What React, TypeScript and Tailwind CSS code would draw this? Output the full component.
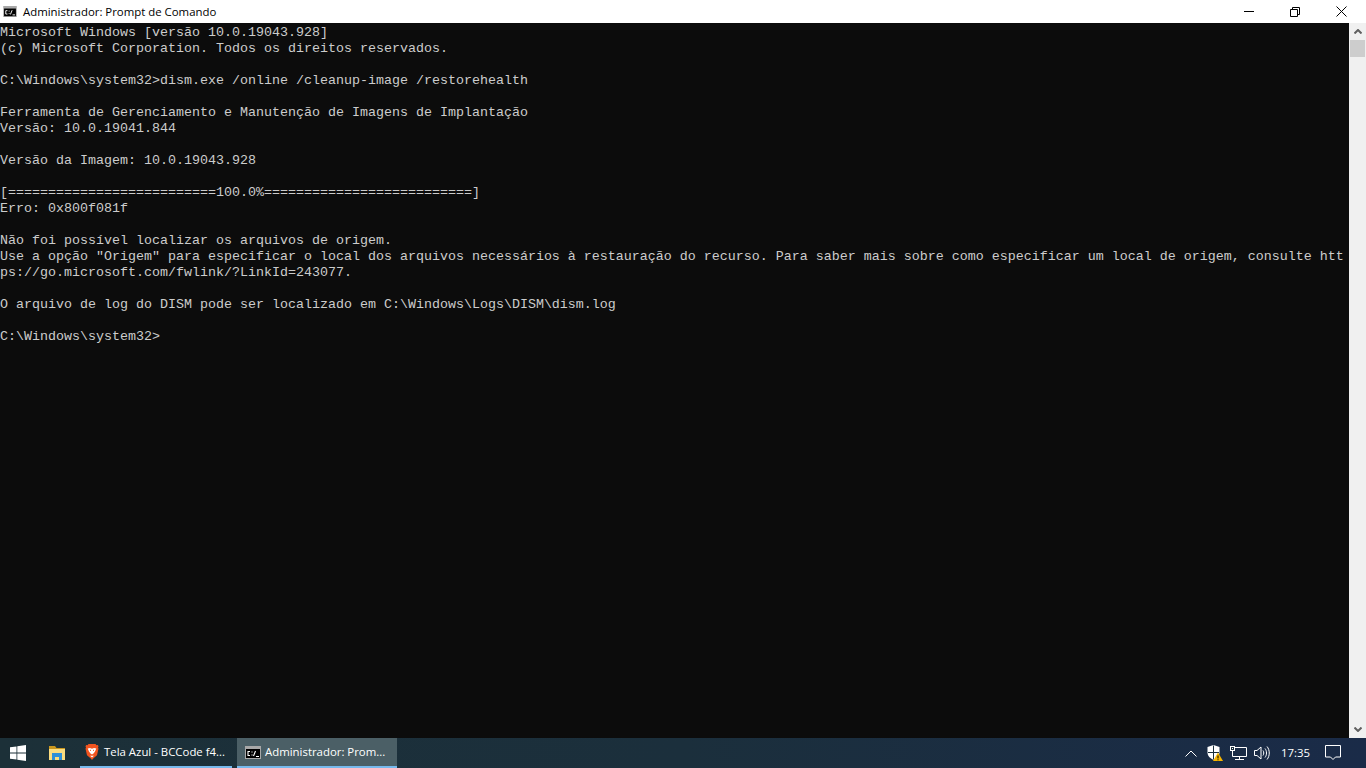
const lines = [
  'Microsoft Windows [versão 10.0.19043.928]',
  '(c) Microsoft Corporation. Todos os direitos reservados.',
  '',
  'C:\\Windows\\system32>dism.exe /online /cleanup-image /restorehealth',
  '',
  'Ferramenta de Gerenciamento e Manutenção de Imagens de Implantação',
  'Versão: 10.0.19041.844',
  '',
  'Versão da Imagem: 10.0.19043.928',
  '',
  '[==========================100.0%==========================]',
  'Erro: 0x800f081f',
  '',
  'Não foi possível localizar os arquivos de origem.',
  'Use a opção "Origem" para especificar o local dos arquivos necessários à restauração do recurso. Para saber mais sobre como especificar um local de origem, consulte htt',
  'ps://go.microsoft.com/fwlink/?LinkId=243077.',
  '',
  'O arquivo de log do DISM pode ser localizado em C:\\Windows\\Logs\\DISM\\dism.log',
  '',
  'C:\\Windows\\system32>',
];

function CmdIcon({ width = 16, height = 13 }: { width?: number; height?: number }) {
  return (
    <svg width={width} height={height} viewBox="0 0 16 13" className="shrink-0">
      <rect width="16" height="13" fill="#a8a8a8" />
      <rect x="1" y="3" width="14" height="9" fill="#000" />
      <path d="M5 5.500H3v4h2M7 5.500v1M7 8.500v1M8.500 10l2-5M11 10.500h3" stroke="#fff" strokeWidth="1.100" fill="none" />
    </svg>
  );
}

function BraveIcon() {
  return (
    <svg width="14" height="16" viewBox="0 0 14 16" className="shrink-0">
      <path d="M3.500 0h7l1 1.200 1.300-.2.700 1.200-.5 1.300.5 1.300-1.500 6.500-3.500 3L7 16l-1.500-1.700-3.500-3L.5 4.800 1 3.500.5 2.200 1.200 1l1.300.2z" fill="#f1541f" />
      <path d="M2.700 4.500L5 4l2 .8L9 4l2.300.5-1.300 3-1.500 2-1.500 1-1.500-1-1.500-2z" fill="#fff" />
      <path d="M5 11.800h4l-2 1.800z" fill="#fff" />
      <path d="M5 6.300h1M8 6.300h1" stroke="#f1541f" />
    </svg>
  );
}

function FolderIcon() {
  return (
    <svg width="16" height="14" viewBox="0 0 16 14" className="shrink-0">
      <path d="M0 0h6l1.500 2H16v2H0z" fill="#c8961e" />
      <path d="M0 3h16v11H0z" fill="#fbdc7f" />
      <path d="M3 7h10v7h-3v-3H6v3H3z" fill="#2f8fd8" />
    </svg>
  );
}

export default function App() {
  return (
    <div className="h-screen flex flex-col overflow-hidden bg-[#0c0c0c] font-['Open_Sans',sans-serif]">
      {/* barra de titulo */}
      <div className="h-[23px] shrink-0 bg-white flex items-center text-black">
        <div className="pl-[3px] pr-[6px]"><CmdIcon width={14} height={11} /></div>
        <span className="text-[11.4px] leading-none">Administrador: Prompt de Comando</span>
        <div className="ml-auto mr-[2px] flex h-full">
          <div className="w-[46px] flex items-center justify-center">
            <div className="w-[10px] h-px bg-black" />
          </div>
          <div className="w-[46px] flex items-center justify-center">
            <svg width="10" height="10" viewBox="0 0 10 10" fill="none" stroke="#000">
              <path d="M0.500 2.500h7v7h-7zM2.500 2.500v-2h7v7h-2" />
            </svg>
          </div>
          <div className="w-[46px] flex items-center justify-center">
            <svg width="11" height="11" viewBox="0 0 11 11" fill="none" stroke="#000">
              <path d="M0.500 0.500l10 10M10.500 0.500l-10 10" />
            </svg>
          </div>
        </div>
      </div>

      {/* console */}
      <div className="flex-1 flex min-h-0">
        <div className="flex-1 min-w-0 overflow-hidden pt-[2px]">
          {lines.map((line, i) => (
            <div key={i} className="h-4 whitespace-pre text-[13.33px] leading-4 text-[#cccccc] font-['Liberation_Mono',monospace]">
              {line}
            </div>
          ))}
        </div>
        <div className="w-[17px] shrink-0 bg-[#f0f0f0] flex flex-col pl-px">
          <div className="h-[17px] flex items-center justify-center">
            <svg width="8" height="5" viewBox="0 0 8 5" fill="none" stroke="#606060" strokeWidth="2">
              <path d="M0.500 4.500L4 1l3.500 3.500" />
            </svg>
          </div>
          <div className="h-[17px] mr-px bg-[#cdcdcd]" />
          <div className="flex-1" />
          <div className="h-[17px] flex items-center justify-center">
            <svg width="8" height="5" viewBox="0 0 8 5" fill="none" stroke="#606060" strokeWidth="2">
              <path d="M0.500 0.500L4 4l3.500-3.500" />
            </svg>
          </div>
        </div>
      </div>

      {/* barra de tarefas */}
      <div className="h-[30px] shrink-0 flex items-stretch text-white bg-[linear-gradient(90deg,#1c3038,#1b2f3c_50%,#1a2b48)]">
        <div className="w-[36px] flex items-center justify-center">
          <svg width="16" height="16" viewBox="0 0 16 16" fill="#fff">
            <path d="M0 2.300l6.500-.9v6.200H0zM7.300 1.300L16 0v7.600H7.300zM0 8.400h6.500v6.200L0 13.700zM7.300 8.400H16V16l-8.700-1.300z" />
          </svg>
        </div>
        <div className="w-[42px] flex items-center justify-center"><FolderIcon /></div>
        <div className="w-[152px] ml-[2px] flex items-center gap-[5px] pl-[5px] border-b-2 border-[#76b9ed]">
          <BraveIcon />
          <span className="text-[11.4px] leading-none whitespace-nowrap">Tela Azul - BCCode f4...</span>
        </div>
        <div className="w-[160px] ml-[5px] flex items-center gap-[4px] pl-[8px] bg-[#4b5f66] border-b-2 border-[#76b9ed]">
          <CmdIcon />
          <span className="text-[11.4px] leading-none whitespace-nowrap">Administrador: Prom...</span>
        </div>

        <div className="ml-auto flex items-center">
          <svg width="12" height="7" viewBox="0 0 12 7" fill="none" stroke="#fff" className="mr-[10px]">
            <path d="M0.500 6.500l5.500-5.500 5.500 5.500" />
          </svg>
          <svg width="16" height="16" viewBox="0 0 16 16" className="mr-[7px]">
            <path d="M0.500 2L6.500 0 12.500 2v6c0 3-2.500 5-6 7-3.500-2-6-4-6-7z" fill="#fff" />
            <path d="M6.500 .5v14M1 7.500h11" stroke="#1b2f3c" strokeWidth="1" />
            <path d="M11 7.500l5 8.500H6z" fill="#f7b500" />
            <path d="M11 10.500v3M11 14.300v1" stroke="#000" />
          </svg>
          <svg width="17" height="14" viewBox="0 0 17 14" fill="none" stroke="#fff" className="mr-[7px]">
            <path d="M4.500 1.500h12v9h-14v-6M9.500 10.500v3M5 13.500h9" />
            <rect x="0.500" y="0.500" width="4" height="4" fill="#1b2f3c" />
            <path d="M2.500 2v1" />
          </svg>
          <svg width="16" height="16" viewBox="0 0 16 16" fill="none" stroke="#fff" className="mr-[11px]">
            <path d="M0.500 5.500h2.500l4-3.500v12l-4-3.500h-2.500z" />
            <path d="M9 5.500c1 1.500 1 3.500 0 5M11 3.500c2 2.500 2 6.500 0 9M13 1.500c3 3.500 3 9.500 0 13" />
          </svg>
          <span className="text-[11.4px] leading-none w-[26px] whitespace-nowrap">17:35</span>
          <div className="w-[59px] flex items-center pl-[18px]">
            <svg width="16" height="16" viewBox="0 0 16 16" fill="none" stroke="#fff">
              <path d="M0.500 0.500h15v11.500h-5l-2.500 2.500-2.500-2.500h-5z" />
            </svg>
          </div>
        </div>
      </div>
    </div>
  );
}
